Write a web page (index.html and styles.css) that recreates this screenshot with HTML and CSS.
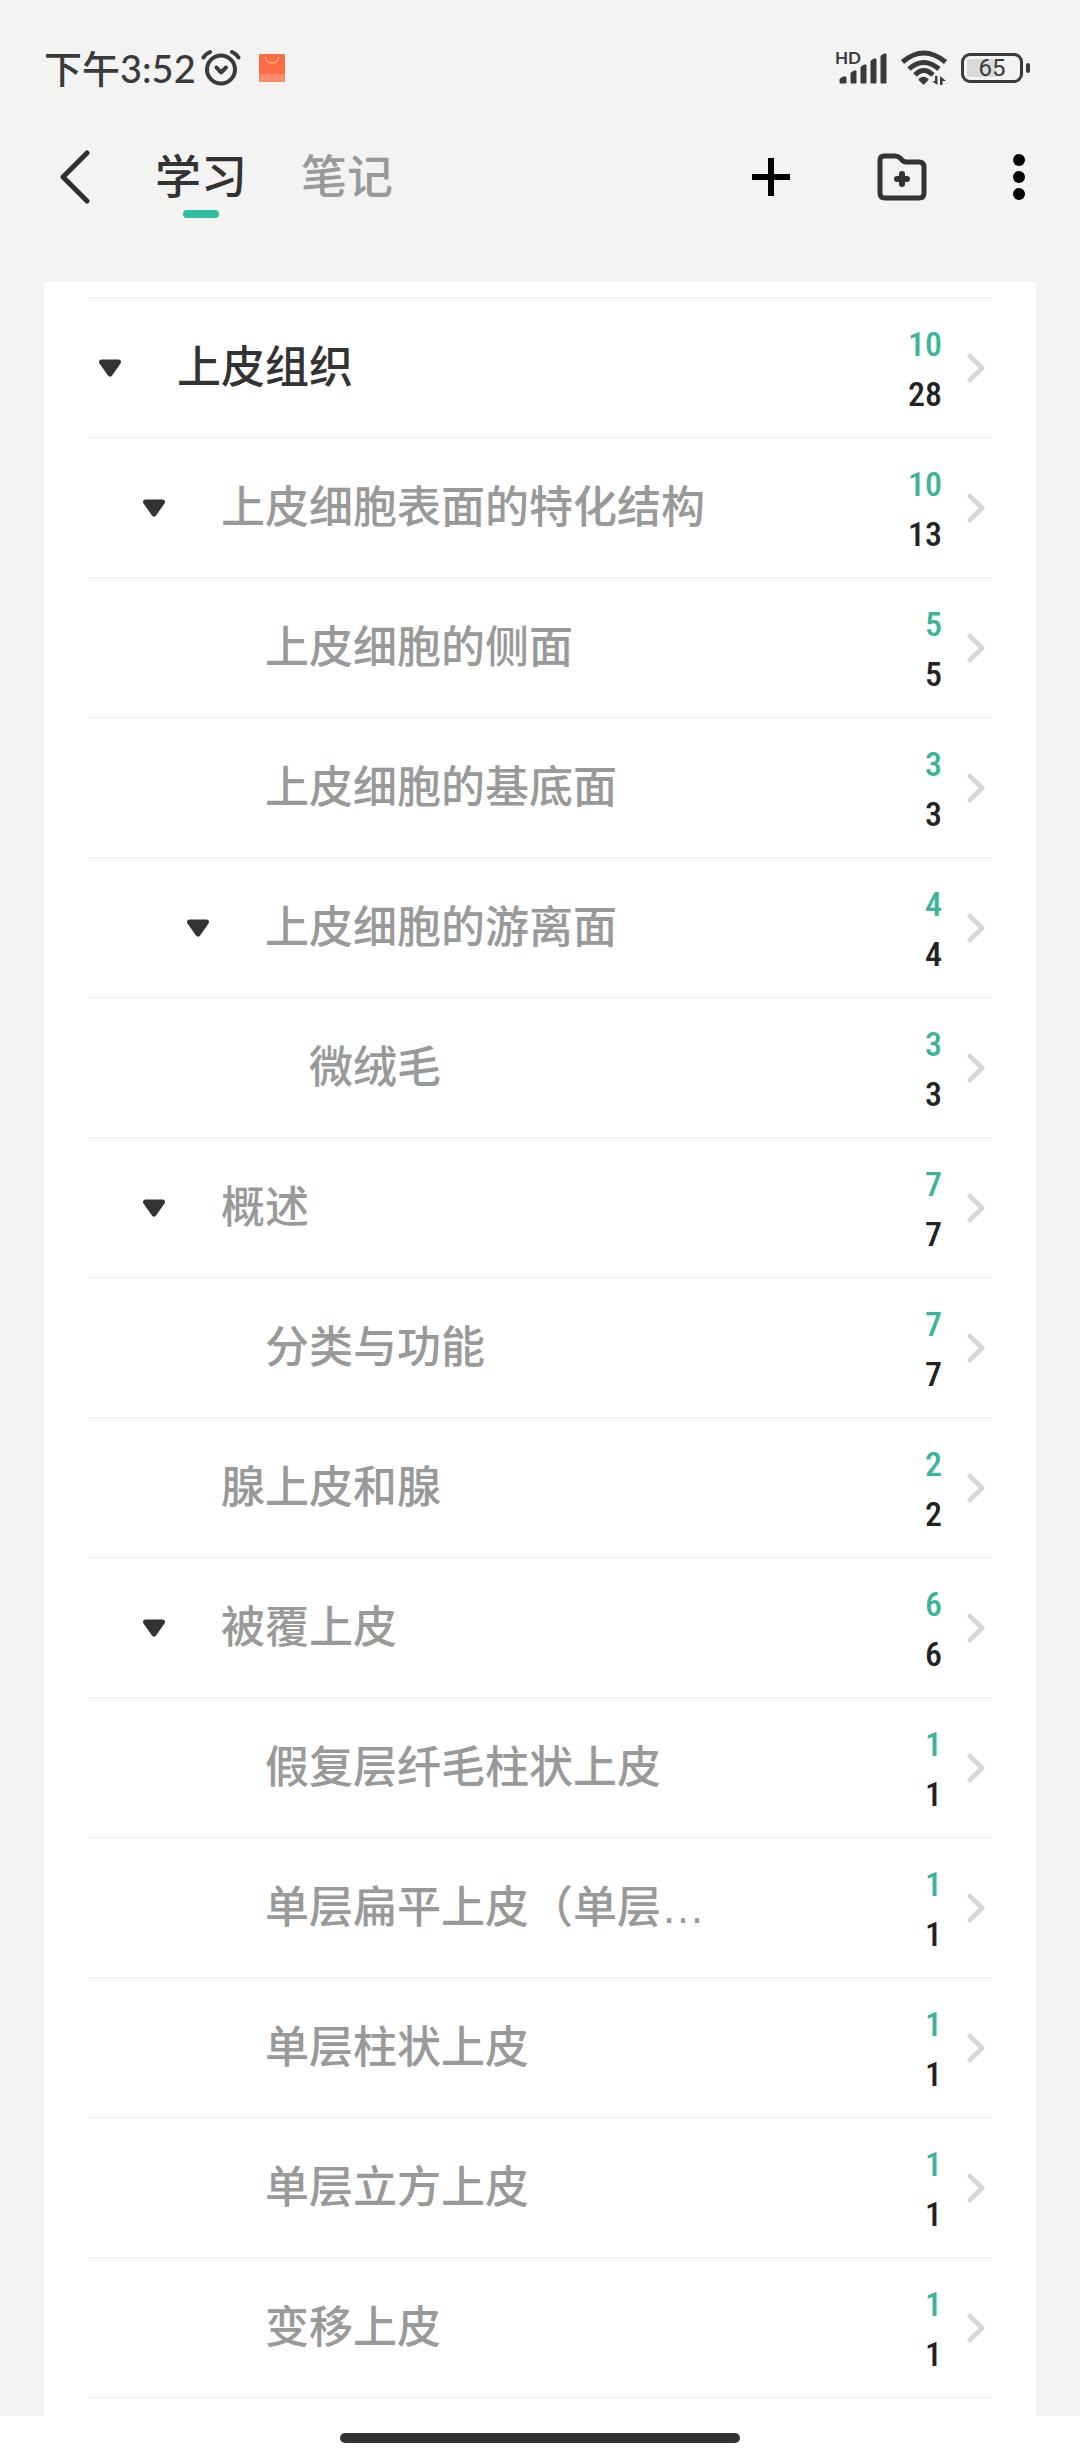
FILE: index.html
```
<!DOCTYPE html>
<html lang="zh-CN">
<head>
    <meta charset="UTF-8">
    <meta name="viewport" content="width=device-width, initial-scale=1.0">
    <title>学习</title>
    <link rel="stylesheet" href="styles.css">
</head>
<body>
    <!-- Shared icons -->
    <svg class="sprite" aria-hidden="true">
        <symbol id="icon-down" viewBox="0 0 24 18">
            <path d="M3.500 3h17L12 15z" fill="#333" stroke="#333" stroke-width="5" stroke-linejoin="round"/>
        </symbol>
        <symbol id="icon-next" viewBox="0 0 18 30">
            <path d="M3 3l12 12L3 27" fill="none" stroke="#d8d8d8" stroke-width="5" stroke-linecap="round" stroke-linejoin="round"/>
        </symbol>
    </svg>

    <div class="status-bar">
        <span class="time">下午3:52</span>
        <svg class="alarm" width="40" height="38" viewBox="0 0 40 38">
            <g fill="none" stroke="#3a3a3a" stroke-width="4" stroke-linecap="round" stroke-linejoin="round">
                <circle cx="20" cy="20.500" r="14"/>
                <path d="M15.500 18.500l4.500 5 5-5"/>
                <path d="M2.500 8.500Q4.500 5 9 3M37.500 8.500Q35.500 5 31 3"/>
            </g>
        </svg>
        <svg class="bag" width="26" height="28" viewBox="0 0 26 28">
            <rect width="26" height="28" rx="1" fill="#ff6b42"/>
            <path d="M0 20h26v7a1 1 0 0 1-1 1H1a1 1 0 0 1-1-1z" fill="#fb8a6a"/>
            <path d="M6.500 3c0 8 13 8 13 0" fill="none" stroke="#ffe0b0" stroke-width="1"/>
        </svg>
        <div class="status-right">
            <div class="signal">
                <span class="hd">HD</span>
                <svg width="48" height="32" viewBox="0 0 48 32">
                    <g fill="#3a3a3a" stroke="#3a3a3a" stroke-linejoin="round">
                        <path d="M1 31v-4l3-2h3v6zM12 31V21l3-2h2v12zM22 31V15l3-2h2v18zM32 31V9l3-2h2v24zM42 31V4l3-2h2v29z"/>
                    </g>
                </svg>
            </div>
            <svg width="46" height="36" viewBox="0 0 46 36">
                <g fill="none" stroke="#3a3a3a" stroke-width="5">
                    <path d="M1.500 12Q22.500-6 44.500 12"/>
                    <path d="M8 19Q22.500 6 38 19"/>
                    <path d="M14 25Q22.500 16 32 25"/>
                </g>
                <path d="M18.500 29.500q4-3.500 8 0l-4 4z" fill="#3a3a3a" stroke="#3a3a3a" stroke-width="2" stroke-linejoin="round"/>
                <path d="M36.500 26v9l-5.500-4h3v-5zM39 35v-9l6 5h-3.500v4z" fill="#3a3a3a"/>
            </svg>
            <div class="battery"><span class="battery-body">65</span><span class="battery-tip"></span></div>
        </div>
    </div>

    <header class="top-bar">
        <button type="button" class="icon-btn back-btn" aria-label="返回">
            <svg width="30" height="54" viewBox="0 0 30 54">
                <path d="M27 3L3 27l24 24" fill="none" stroke="#2e2e2e" stroke-width="5" stroke-linecap="round" stroke-linejoin="round"/>
            </svg>
        </button>
        <nav class="tabs">
            <button type="button" class="tab active">学习</button>
            <button type="button" class="tab">笔记</button>
        </nav>
        <div class="actions">
            <button type="button" class="icon-btn" aria-label="添加">
                <svg width="40" height="40" viewBox="0 0 40 40">
                    <path d="M20 1v38M1 20h38" stroke="#000" stroke-width="6"/>
                </svg>
            </button>
            <button type="button" class="icon-btn" aria-label="新建文件夹">
                <svg width="50" height="48" viewBox="0 0 50 48">
                    <path d="M7 3h11q3 0 5 2l3 3q2 1 4 1h12q5 0 5 5v26q0 5-5 5H8q-5 0-5-5V7q0-4 4-4z" fill="none" stroke="#333" stroke-width="5"/>
                    <path d="M25 21v10M20 26h10" stroke="#333" stroke-width="6" stroke-linecap="round"/>
                </svg>
            </button>
            <button type="button" class="icon-btn" aria-label="更多">
                <svg width="12" height="46" viewBox="0 0 12 46">
                    <circle cx="6" cy="6" r="6"/>
                    <circle cx="6" cy="23" r="6"/>
                    <circle cx="6" cy="40" r="6"/>
                </svg>
            </button>
        </div>
    </header>

    <main class="card">
        <ul class="tree">
            <li class="row root">
                <button type="button" class="toggle" aria-label="收起"><svg><use href="#icon-down"/></svg></button>
                <a href="#" class="title">上皮组织</a>
                <div class="counts"><span class="done">10</span><span>28</span></div>
                <svg class="next"><use href="#icon-next"/></svg>
            </li>
            <li class="row level-1">
                <button type="button" class="toggle" aria-label="收起"><svg><use href="#icon-down"/></svg></button>
                <a href="#" class="title">上皮细胞表面的特化结构</a>
                <div class="counts"><span class="done">10</span><span>13</span></div>
                <svg class="next"><use href="#icon-next"/></svg>
            </li>
            <li class="row level-2">
                <span class="toggle"></span>
                <a href="#" class="title">上皮细胞的侧面</a>
                <div class="counts"><span class="done">5</span><span>5</span></div>
                <svg class="next"><use href="#icon-next"/></svg>
            </li>
            <li class="row level-2">
                <span class="toggle"></span>
                <a href="#" class="title">上皮细胞的基底面</a>
                <div class="counts"><span class="done">3</span><span>3</span></div>
                <svg class="next"><use href="#icon-next"/></svg>
            </li>
            <li class="row level-2">
                <button type="button" class="toggle" aria-label="收起"><svg><use href="#icon-down"/></svg></button>
                <a href="#" class="title">上皮细胞的游离面</a>
                <div class="counts"><span class="done">4</span><span>4</span></div>
                <svg class="next"><use href="#icon-next"/></svg>
            </li>
            <li class="row level-3">
                <span class="toggle"></span>
                <a href="#" class="title">微绒毛</a>
                <div class="counts"><span class="done">3</span><span>3</span></div>
                <svg class="next"><use href="#icon-next"/></svg>
            </li>
            <li class="row level-1">
                <button type="button" class="toggle" aria-label="收起"><svg><use href="#icon-down"/></svg></button>
                <a href="#" class="title">概述</a>
                <div class="counts"><span class="done">7</span><span>7</span></div>
                <svg class="next"><use href="#icon-next"/></svg>
            </li>
            <li class="row level-2">
                <span class="toggle"></span>
                <a href="#" class="title">分类与功能</a>
                <div class="counts"><span class="done">7</span><span>7</span></div>
                <svg class="next"><use href="#icon-next"/></svg>
            </li>
            <li class="row level-1">
                <span class="toggle"></span>
                <a href="#" class="title">腺上皮和腺</a>
                <div class="counts"><span class="done">2</span><span>2</span></div>
                <svg class="next"><use href="#icon-next"/></svg>
            </li>
            <li class="row level-1">
                <button type="button" class="toggle" aria-label="收起"><svg><use href="#icon-down"/></svg></button>
                <a href="#" class="title">被覆上皮</a>
                <div class="counts"><span class="done">6</span><span>6</span></div>
                <svg class="next"><use href="#icon-next"/></svg>
            </li>
            <li class="row level-2">
                <span class="toggle"></span>
                <a href="#" class="title">假复层纤毛柱状上皮</a>
                <div class="counts"><span class="done">1</span><span>1</span></div>
                <svg class="next"><use href="#icon-next"/></svg>
            </li>
            <li class="row level-2">
                <span class="toggle"></span>
                <a href="#" class="title">单层扁平上皮（单层…</a>
                <div class="counts"><span class="done">1</span><span>1</span></div>
                <svg class="next"><use href="#icon-next"/></svg>
            </li>
            <li class="row level-2">
                <span class="toggle"></span>
                <a href="#" class="title">单层柱状上皮</a>
                <div class="counts"><span class="done">1</span><span>1</span></div>
                <svg class="next"><use href="#icon-next"/></svg>
            </li>
            <li class="row level-2">
                <span class="toggle"></span>
                <a href="#" class="title">单层立方上皮</a>
                <div class="counts"><span class="done">1</span><span>1</span></div>
                <svg class="next"><use href="#icon-next"/></svg>
            </li>
            <li class="row level-2">
                <span class="toggle"></span>
                <a href="#" class="title">变移上皮</a>
                <div class="counts"><span class="done">1</span><span>1</span></div>
                <svg class="next"><use href="#icon-next"/></svg>
            </li>
        </ul>
    </main>

    <footer class="home-bar"><span class="home-pill"></span></footer>
</body>
</html>
```
FILE: styles.css
```
* {
    box-sizing: border-box;
}
body {
    margin: 0;
    min-height: 100vh;
    display: flex;
    flex-direction: column;
    background-color: #f3f3f3;
    color: #333;
    font-family: "Liberation Sans", "Noto Sans CJK SC", sans-serif;
    font-weight: 500;
}
svg {
    display: block;
    flex: none;
}
button {
    padding: 0;
    border: none;
    background: none;
    color: inherit;
    font: inherit;
    cursor: pointer;
}
.sprite {
    position: absolute;
    width: 0;
    height: 0;
}

/* Status bar */
.status-bar {
    display: flex;
    align-items: center;
    height: 136px;
    padding: 0 50px 0 44px;
    color: #3a3a3a;
}
.time {
    font-family: Lato, "Noto Sans CJK SC", sans-serif;
    font-size: 38px;
    line-height: 48px;
}
.alarm {
    margin-left: 5px;
}
.bag {
    margin-left: 18px;
}
.status-right {
    display: flex;
    align-items: center;
    gap: 14px;
    margin-left: auto;
}
.signal {
    position: relative;
}
.hd {
    position: absolute;
    top: -3px;
    left: -4px;
    font-family: Lato, sans-serif;
    font-size: 17px;
    font-weight: 700;
    line-height: 17px;
}
.battery {
    display: flex;
    align-items: center;
    gap: 3px;
}
.battery-body {
    width: 62px;
    height: 30px;
    border: 3px solid #3a3a3a;
    border-radius: 9px;
    padding: 3px;
    background: linear-gradient(to right, #d9d9d9 60%, transparent 60%) content-box;
    font-family: Roboto, sans-serif;
    font-size: 24px;
    font-weight: 400;
    line-height: 18px;
    text-align: center;
}
.battery-tip {
    width: 4px;
    height: 10px;
    border-radius: 2px;
    background-color: #3a3a3a;
}

/* Top bar */
.top-bar {
    display: flex;
    align-items: center;
    height: 82px;
    margin-bottom: 64px;
    padding: 0 55px 0 60px;
}
.tabs {
    display: flex;
    gap: 54px;
    margin-left: 65px;
}
.tab {
    position: relative;
    height: 82px;
    color: #999;
    font-size: 46px;
    line-height: 82px;
}
.tab.active {
    color: #333;
}
.tab.active::after {
    content: "";
    position: absolute;
    bottom: 0;
    left: 50%;
    width: 36px;
    height: 8px;
    margin-left: -18px;
    border-radius: 4px;
    background-color: #2fbd9b;
}
.actions {
    display: flex;
    align-items: center;
    gap: 86px;
    margin-left: auto;
}

/* Chapter tree */
.card {
    flex: 1;
    margin: 0 44px;
    padding: 15px 44px 18px;
    background-color: #fff;
}
.tree {
    margin: 0;
    padding: 0;
    list-style: none;
    border-top: 1px solid #f2f2f2;
}
.row {
    display: flex;
    align-items: center;
    height: 140px;
    padding-right: 7px;
    border-bottom: 1px solid #f2f2f2;
}
.level-1 {
    padding-left: 44px;
}
.level-2 {
    padding-left: 88px;
}
.level-3 {
    padding-left: 132px;
}
.toggle {
    flex: none;
    width: 89px;
    padding-left: 10px;
}
.toggle svg {
    width: 24px;
    height: 18px;
}
.title {
    flex: 1;
    min-width: 0;
    overflow: hidden;
    white-space: nowrap;
    color: #999;
    font-size: 44px;
    line-height: 64px;
    text-decoration: none;
}
.root .title {
    color: #333;
}
.counts {
    display: flex;
    flex-direction: column;
    margin-right: 25px;
    padding-top: 2px;
    color: #222;
    font-family: "Roboto Condensed", Roboto, sans-serif;
    font-size: 34px;
    line-height: 50px;
    text-align: right;
}
.done {
    color: #3bb498;
}
.next {
    width: 18px;
    height: 30px;
}

/* Home indicator */
.home-bar {
    display: flex;
    justify-content: center;
    align-items: center;
    height: 44px;
    background-color: #fff;
}
.home-pill {
    width: 37%;
    height: 10px;
    border-radius: 5px;
    background-color: #333;
}
```
